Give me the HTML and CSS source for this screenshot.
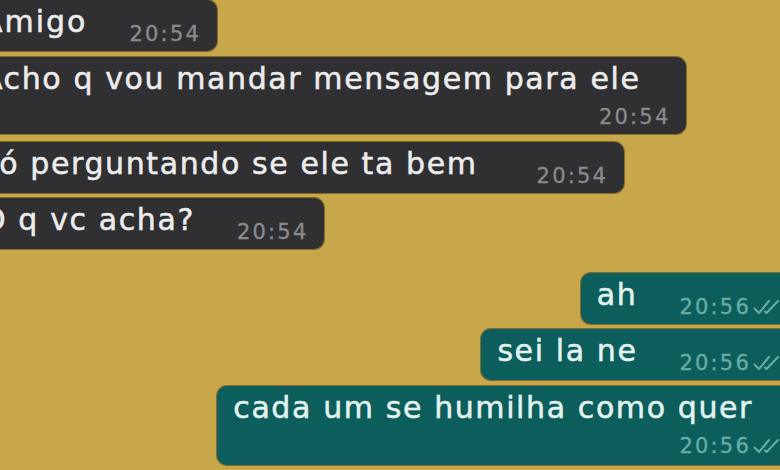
FILE: index.html
```html
<!DOCTYPE html>
<html lang="pt">
<head>
<meta charset="utf-8">
<title>Conversa</title>
<link rel="stylesheet" href="styles.css">
</head>
<body>
<div class="chat">
  <div class="bubble in b1">
    <span class="text">Amigo</span>
    <span class="time">20:54</span>
  </div>
  <div class="bubble in stacked b2">
    <span class="text">Acho q vou mandar mensagem para ele</span>
    <span class="time">20:54</span>
  </div>
  <div class="bubble in b3">
    <span class="text">só perguntando se ele ta bem</span>
    <span class="time">20:54</span>
  </div>
  <div class="bubble in b4">
    <span class="text">O q vc acha?</span>
    <span class="time">20:54</span>
  </div>
  <div class="bubble out b5">
    <span class="text">ah</span>
    <span class="time">20:56<svg class="tick" viewBox="0 0 30 18" width="30" height="18"><path d="M1.5 10.5 L6 15 L16 3"/><path d="M12 13.5 L13.5 15 L25 3"/></svg></span>
  </div>
  <div class="bubble out b6">
    <span class="text">sei la ne</span>
    <span class="time">20:56<svg class="tick" viewBox="0 0 30 18" width="30" height="18"><path d="M1.5 10.5 L6 15 L16 3"/><path d="M12 13.5 L13.5 15 L25 3"/></svg></span>
  </div>
  <div class="bubble out stacked b7">
    <span class="text">cada um se humilha como quer</span>
    <span class="time">20:56<svg class="tick" viewBox="0 0 30 18" width="30" height="18"><path d="M1.5 10.5 L6 15 L16 3"/><path d="M12 13.5 L13.5 15 L25 3"/></svg></span>
  </div>
</div>
</body>
</html>
```
FILE: styles.css
```css
html, body {
  margin: 0;
  padding: 0;
  overflow: hidden;
}
body {
  width: 780px;
  height: 470px;
  background: #c8a74b;
  font-family: "DejaVu Sans", "Noto Sans", sans-serif;
}
.chat {
  display: flex;
  flex-direction: column;
  gap: 6px;
  width: 780px;
  height: 470px;
  overflow: hidden;
}
.bubble {
  display: flex;
  align-items: flex-end;
  padding: 4px 16px 5px 16px;
  border-radius: 10px;
  box-shadow: 0 0 0 1px rgba(70, 58, 25, 0.55);
}
.in {
  align-self: flex-start;
  margin-left: -34px;
  background: #303033;
  color: #ededed;
}
.out {
  align-self: flex-end;
  margin-right: -19px;
  background: #0c5e5d;
  color: #e4f3f0;
}
.text {
  font-size: 30px;
  line-height: 36px;
  letter-spacing: 1.6px;
  margin-bottom: 6px;
  white-space: nowrap;
  -webkit-text-stroke: 0.5px currentColor;
}
.time {
  display: flex;
  align-items: center;
  font-size: 21px;
  line-height: 24px;
  letter-spacing: 2.2px;
  margin-left: 42px;
  white-space: nowrap;
  -webkit-text-stroke: 0.3px currentColor;
}
.in .time {
  color: #8b8b8d;
}
.out .time {
  color: #68ada6;
}
.tick {
  margin-left: 2px;
  fill: none;
  stroke: #68ada6;
  stroke-width: 2;
  stroke-linecap: round;
  stroke-linejoin: round;
}
.stacked {
  flex-direction: column;
  align-items: stretch;
}
.stacked .text {
  margin-bottom: 8px;
  padding-right: 30px;
}
.stacked .time {
  align-self: flex-end;
  margin-left: 0;
}
.b1 .text {
  letter-spacing: 2px;
}
.b3 {
  margin-top: 2px;
}
.b3 .time {
  margin-left: 59px;
}
.b4 {
  margin-top: -1px;
}
.b5 {
  margin-top: 18px;
}
.b6 {
  margin-top: -1px;
}
.b7 {
  padding-bottom: 7px;
}
```
